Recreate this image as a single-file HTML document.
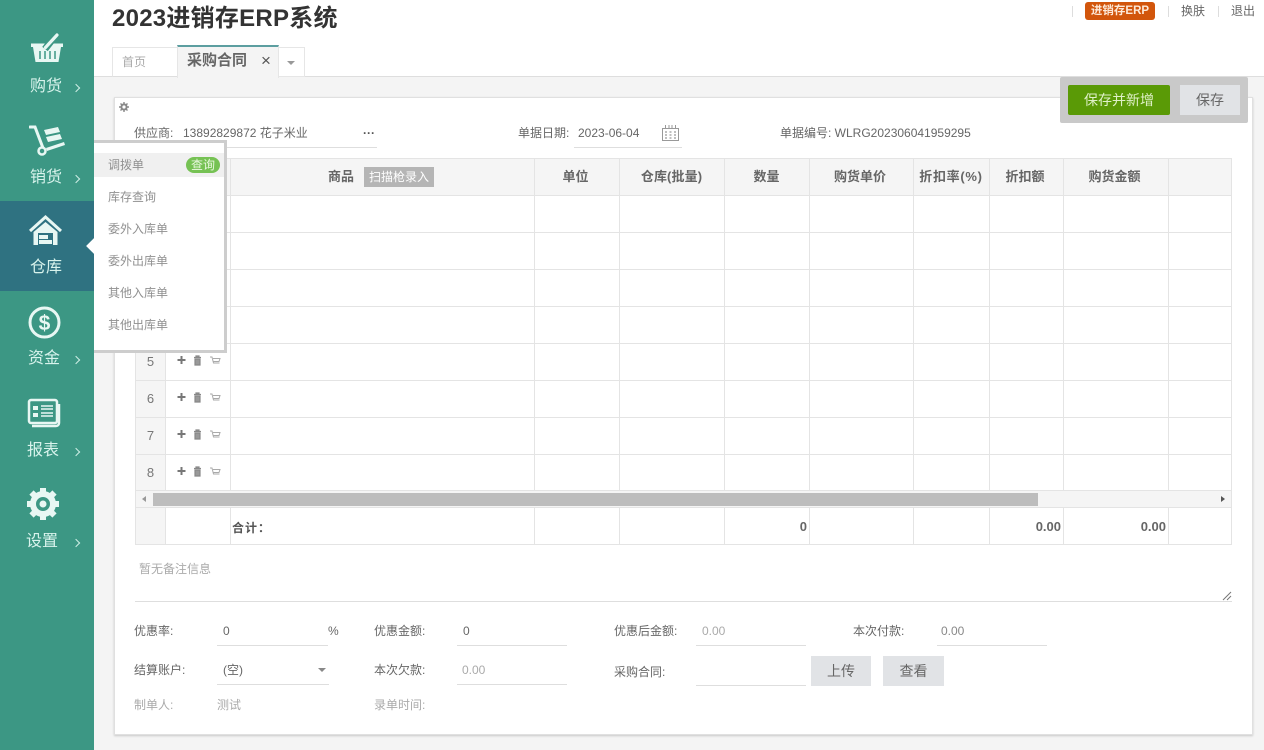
<!DOCTYPE html>
<html lang="zh-CN"><head><meta charset="utf-8"><title>2023进销存ERP系统</title>
<style>
*{box-sizing:border-box}
html,body{margin:0;padding:0;width:1264px;height:750px;overflow:hidden;background:#f4f4f4;font-family:"Liberation Sans","Noto Sans CJK SC",sans-serif;color:#666}
.t{position:absolute;white-space:nowrap;font-size:12px;line-height:16px;color:#666}
.side{position:absolute;left:0;top:0;width:94px;height:750px;background:#3c9784}
.nav{position:absolute;color:#d8f3ec;font-size:16px;line-height:20px;white-space:nowrap}
.chev{position:absolute;width:6px;height:6px;border-top:1px solid #cfeee6;border-right:1px solid #cfeee6;transform:rotate(45deg)}
.h{position:absolute;left:135px;width:1097px;height:1px;background:#e4e4e4}
.v{position:absolute;top:158px;width:1px;height:333px;background:#e4e4e4}
.f{top:508px;height:37px}
.th{position:absolute;top:168px;font-size:13px;line-height:18px;font-weight:bold;color:#666;white-space:nowrap;text-align:center}
.num{position:absolute;left:136px;width:29px;text-align:center;font-size:13px;line-height:16px;color:#777}
.ul{position:absolute;height:1px;background:#dedede}
.btn{position:absolute;background:#e1e3e6;color:#666;text-align:center;font-size:14px}
.mi{position:absolute;left:108px;font-size:12px;line-height:16px;color:#909090;white-space:nowrap}
.sep{position:absolute;top:6px;width:1px;height:11px;background:#ddd}
</style></head><body>

<!-- top bar -->
<div style="position:absolute;left:94px;top:0;width:1170px;height:77px;background:#fff;border-bottom:1px solid #dedede"></div>
<div class="t" style="left:112px;top:3px;font-size:24px;line-height:32px;font-weight:bold;color:#333;letter-spacing:.25px">2023进销存ERP系统</div>
<div class="sep" style="left:1072px"></div>
<div style="position:absolute;left:1085px;top:2px;width:70px;height:18px;background:#d2560c;border-radius:3px;color:#fde9d8;font-size:11.500px;line-height:18px;text-align:center;font-weight:bold;white-space:nowrap">进销存ERP</div>
<div class="sep" style="left:1168px"></div>
<div class="t" style="left:1181px;top:3px">换肤</div>
<div class="sep" style="left:1218px"></div>
<div class="t" style="left:1231px;top:3px">退出</div>

<!-- tabs -->
<div style="position:absolute;left:112px;top:47px;width:66px;height:30px;background:#fff;border:1px solid #e6e6e6;border-bottom:1px solid #dedede"></div>
<div class="t" style="left:122px;top:54px;color:#aaa">首页</div>
<div style="position:absolute;left:177px;top:45px;width:102px;height:33px;background:#f4f4f4;border-top:2px solid #5c9ea0;border-left:1px solid #e6e6e6;border-right:1px solid #e6e6e6"></div>
<div class="t" style="left:187px;top:52px;font-size:15px;line-height:18px;font-weight:bold;color:#666">采购合同</div>
<div class="t" style="left:261px;top:53px;font-size:17px;line-height:16px;color:#555">×</div>
<div style="position:absolute;left:278px;top:47px;width:27px;height:30px;background:#fff;border:1px solid #e6e6e6"></div>
<div style="position:absolute;left:287px;top:61px;border-left:4px solid transparent;border-right:4px solid transparent;border-top:4px solid #999"></div>

<!-- panel -->
<div style="position:absolute;left:114px;top:97px;width:1139px;height:638px;background:#fff;border:1px solid #e0e0e0;box-shadow:0 1px 2px rgba(0,0,0,.18)"></div>
<svg style="position:absolute;left:119px;top:102px" width="10" height="10" viewBox="0 0 10 10"><circle cx="5" cy="5" r="2.600" fill="none" stroke="#888" stroke-width="2"/><path d="M5 0v2M5 8v2M0 5h2M8 5h2M1.500 1.500l1.400 1.400M7.100 7.100l1.400 1.400M8.500 1.500L7.100 2.900M2.900 7.100L1.500 8.500" stroke="#888" stroke-width="1.400"/></svg>

<!-- header form -->
<div class="t" style="left:134px;top:125px">供应商:</div>
<div class="t" style="left:183px;top:125px">13892829872 花子米业</div>
<div class="t" style="left:363px;top:125px;font-weight:bold;color:#555">···</div>
<div class="ul" style="left:180px;top:147px;width:197px"></div>
<div class="t" style="left:518px;top:125px">单据日期:</div>
<div class="t" style="left:578px;top:125px">2023-06-04</div>
<svg style="position:absolute;left:662px;top:125px" width="17" height="16" viewBox="0 0 17 16" fill="none" stroke="#999"><path d="M.5 3.500h16v12H.5zM3.500 0v3M7 0v3M10 0v3M13.500 0v3"/><path d="M3 7h2M7.500 7h2M12 7h2M3 10h2M7.500 10h2M12 10h2M3 13h2M7.500 13h2M12 13h2" stroke-width="1.200"/></svg>
<div class="ul" style="left:574px;top:147px;width:108px"></div>
<div class="t" style="left:780px;top:125px">单据编号: WLRG202306041959295</div>

<!-- grid -->
<div style="position:absolute;left:135px;top:158px;width:1097px;height:37px;background:#f5f5f5"></div>
<div style="position:absolute;left:135px;top:158px;width:30px;height:387px;background:#f5f5f5"></div>
<div style="position:absolute;left:135px;top:491px;width:1097px;height:17px;background:#f5f5f5"></div>
<div class="h" style="top:158px"></div><div class="h" style="top:195px"></div><div class="h" style="top:232px"></div><div class="h" style="top:269px"></div><div class="h" style="top:306px"></div><div class="h" style="top:343px"></div><div class="h" style="top:380px"></div><div class="h" style="top:417px"></div><div class="h" style="top:454px"></div><div class="h" style="top:490px"></div><div class="h" style="top:507px"></div><div class="h" style="top:544px"></div>
<div class="v" style="left:135px;height:387px"></div><div class="v" style="left:165px"></div><div class="v" style="left:230px"></div><div class="v" style="left:534px"></div><div class="v" style="left:619px"></div><div class="v" style="left:724px"></div><div class="v" style="left:809px"></div><div class="v" style="left:913px"></div><div class="v" style="left:989px"></div><div class="v" style="left:1063px"></div><div class="v" style="left:1168px"></div><div class="v" style="left:1231px;height:387px"></div>
<div class="v f" style="left:165px"></div><div class="v f" style="left:230px"></div><div class="v f" style="left:534px"></div><div class="v f" style="left:619px"></div><div class="v f" style="left:724px"></div><div class="v f" style="left:809px"></div><div class="v f" style="left:913px"></div><div class="v f" style="left:989px"></div><div class="v f" style="left:1063px"></div><div class="v f" style="left:1168px"></div>

<div class="th" style="left:328px">商品</div>
<div style="position:absolute;left:364px;top:167px;width:70px;height:20px;background:#b5b5b5;color:#fff;font-size:12px;line-height:20px;text-align:center;white-space:nowrap">扫描枪录入</div>
<div class="th" style="left:533px;width:85px">单位</div>
<div class="th" style="left:619px;width:105px;letter-spacing:.1px">仓库(批量)</div>
<div class="th" style="left:724px;width:85px">数量</div>
<div class="th" style="left:808px;width:104px">购货单价</div>
<div class="th" style="left:913px;width:76px;letter-spacing:.7px">折扣率(%)</div>
<div class="th" style="left:988px;width:74px">折扣额</div>
<div class="th" style="left:1062px;width:105px">购货金额</div>

<div class="num" style="top:354px">5</div><div class="num" style="top:391px">6</div><div class="num" style="top:428px">7</div><div class="num" style="top:465px">8</div>

<svg width="0" height="0" style="position:absolute"><defs><g id="ops"><path d="M4.500 1v8M.5 5h8" stroke="#777" stroke-width="2" fill="none"/><path d="M17 2.500h7M19 2.500V1h3v1.500M18 4h5v6h-5z" stroke="#888" stroke-width="1.200" fill="#999"/><path d="M33 2h2l1.500 6h6M36 3.500h7l-1 3h-5.500" stroke="#aaa" stroke-width="1" fill="none"/></g></defs></svg>
<svg style="position:absolute;left:177px;top:355px" width="46" height="11"><use href="#ops"/></svg>
<svg style="position:absolute;left:177px;top:392px" width="46" height="11"><use href="#ops"/></svg>
<svg style="position:absolute;left:177px;top:429px" width="46" height="11"><use href="#ops"/></svg>
<svg style="position:absolute;left:177px;top:466px" width="46" height="11"><use href="#ops"/></svg>

<!-- scrollbar -->
<div style="position:absolute;left:142px;top:496px;border-top:3.500px solid transparent;border-bottom:3.500px solid transparent;border-right:4px solid #999"></div>
<div style="position:absolute;left:153px;top:493px;width:885px;height:13px;background:#bdbdbd"></div>
<div style="position:absolute;left:1221px;top:496px;border-top:3.500px solid transparent;border-bottom:3.500px solid transparent;border-left:4px solid #555"></div>

<!-- totals -->
<div class="t" style="left:232px;top:520px;font-size:12px;font-weight:bold;color:#555;letter-spacing:1px">合计：</div>
<div class="t" style="left:724px;width:83px;top:519px;text-align:right;font-size:13px;font-weight:bold;color:#666">0</div>
<div class="t" style="left:989px;width:72px;top:519px;text-align:right;font-size:13px;font-weight:bold;color:#666">0.00</div>
<div class="t" style="left:1063px;width:103px;top:519px;text-align:right;font-size:13px;font-weight:bold;color:#666">0.00</div>

<!-- remark -->
<div class="t" style="left:139px;top:561px;color:#aaa">暂无备注信息</div>
<div class="ul" style="left:135px;top:601px;width:1097px"></div>
<svg style="position:absolute;left:1221px;top:590px" width="11" height="11" fill="none" stroke="#777"><path d="M2 10l8-8M6 10l4-4"/></svg>

<!-- bottom form -->
<div class="t" style="left:134px;top:623px">优惠率:</div>
<div class="t" style="left:223px;top:623px">0</div><div class="ul" style="left:217px;top:645px;width:111px"></div>
<div class="t" style="left:328px;top:623px">%</div>
<div class="t" style="left:374px;top:623px">优惠金额:</div>
<div class="t" style="left:463px;top:623px">0</div><div class="ul" style="left:457px;top:645px;width:110px"></div>
<div class="t" style="left:614px;top:623px">优惠后金额:</div>
<div class="t" style="left:702px;top:623px;color:#aaa">0.00</div><div class="ul" style="left:696px;top:645px;width:110px"></div>
<div class="t" style="left:853px;top:623px">本次付款:</div>
<div class="t" style="left:941px;top:623px;color:#888">0.00</div><div class="ul" style="left:937px;top:645px;width:110px"></div>

<div class="t" style="left:134px;top:662px">结算账户:</div>
<div class="t" style="left:223px;top:662px">(空)</div>
<div style="position:absolute;left:318px;top:668px;border-left:4px solid transparent;border-right:4px solid transparent;border-top:4px solid #888"></div>
<div class="ul" style="left:217px;top:684px;width:112px"></div>
<div class="t" style="left:374px;top:662px">本次欠款:</div>
<div class="t" style="left:462px;top:662px;color:#aaa">0.00</div><div class="ul" style="left:457px;top:684px;width:110px"></div>
<div class="t" style="left:614px;top:664px">采购合同:</div><div class="ul" style="left:696px;top:685px;width:110px"></div>
<div class="btn" style="left:811px;top:656px;width:60px;height:30px;line-height:30px">上传</div>
<div class="btn" style="left:883px;top:656px;width:61px;height:30px;line-height:30px">查看</div>

<div class="t" style="left:134px;top:697px;color:#aaa">制单人:</div>
<div class="t" style="left:217px;top:697px;color:#aaa">测试</div>
<div class="t" style="left:374px;top:697px;color:#aaa">录单时间:</div>

<!-- save bar -->
<div style="position:absolute;left:1060px;top:77px;width:188px;height:46px;background:#c9c9c9;border-radius:2px"></div>
<div style="position:absolute;left:1068px;top:85px;width:102px;height:30px;background:#5a9a06;border-radius:2px;color:#dff0c8;font-size:14px;line-height:30px;text-align:center">保存并新增</div>
<div class="btn" style="left:1180px;top:85px;width:60px;height:30px;line-height:30px">保存</div>

<!-- sidebar -->
<div class="side"></div>
<div style="position:absolute;left:0;top:201px;width:94px;height:90px;background:#2f7281"></div>

<svg style="position:absolute;left:30px;top:33px" width="34" height="30" viewBox="0 0 34 30"><path d="M1 10.500h32v3.500h-2l-2.500 15H5.500L3 14H1z" fill="#e8f7f3"/><path d="M15 16L26 2" stroke="#3c9784" stroke-width="7"/><path d="M15.500 14.500L27 2" stroke="#e8f7f3" stroke-width="3.200" stroke-linecap="round"/><path d="M10 18v8M15 18v8M20 18v8M25 18v8" stroke="#3c9784" stroke-width="1.500"/></svg>
<div class="nav" style="left:30px;top:77px">购货</div><div class="chev" style="left:73px;top:85px"></div>

<svg style="position:absolute;left:29px;top:124px" width="36" height="33" viewBox="0 0 36 33" fill="#e8f7f3"><path d="M1 3h5l8 21" fill="none" stroke="#e8f7f3" stroke-width="3" stroke-linecap="round"/><path d="M15 6l14-3 2 5-14 3zM17 13l14-3 2 5-14 3zM17 24l18-6 1 3-18 6z"/><circle cx="13" cy="27" r="3.500" fill="#3c9784" stroke="#e8f7f3" stroke-width="2.500"/></svg>
<div class="nav" style="left:30px;top:168px">销货</div><div class="chev" style="left:73px;top:176px"></div>

<svg style="position:absolute;left:29px;top:214px" width="34" height="32" viewBox="0 0 34 32"><path d="M4.500 31V18L16.500 8 28.500 18v13z" fill="#e8f7f3"/><path d="M1 17L16.500 3 32 17" fill="none" stroke="#e8f7f3" stroke-width="3"/><path d="M9 19h15v12H9z" fill="#2f7281"/><path d="M10 21h9v4h-9zM10 26h13v4H10z" fill="#e8f7f3"/></svg>
<div class="nav" style="left:30px;top:258px">仓库</div>
<div style="position:absolute;left:86px;top:238px;width:16px;height:16px;background:#fff;transform:rotate(45deg) scale(.7)"></div>

<svg style="position:absolute;left:28px;top:306px" width="33" height="33" viewBox="0 0 33 33"><circle cx="16.500" cy="16.500" r="14.500" fill="none" stroke="#e8f7f3" stroke-width="3"/><text x="16.500" y="24" text-anchor="middle" font-family="Liberation Sans" font-weight="bold" font-size="21" fill="#e8f7f3">$</text></svg>
<div class="nav" style="left:28px;top:349px">资金</div><div class="chev" style="left:73px;top:357px"></div>

<svg style="position:absolute;left:27px;top:398px" width="34" height="30" viewBox="0 0 34 30" fill="none" stroke="#e8f7f3"><rect x="2" y="2" width="28" height="23" rx="2" stroke-width="2.500"/><path d="M32 6v19a3 3 0 0 1-3 3H5" stroke-width="2.500"/><path d="M6 8h5v4H6zM6 15h5v4H6z" fill="#e8f7f3" stroke="none"/><path d="M14 8h12M14 11h12M14 15h12M14 18h12" stroke-width="1.500"/></svg>
<div class="nav" style="left:27px;top:441px">报表</div><div class="chev" style="left:73px;top:449px"></div>

<svg style="position:absolute;left:26px;top:487px" width="34" height="34" viewBox="0 0 34 34"><circle cx="17" cy="17" r="10" fill="none" stroke="#e8f7f3" stroke-width="6"/><circle cx="17" cy="17" r="3.500" fill="#e8f7f3"/><path d="M17 1v7M17 26v7M1 17h7M26 17h7M5.500 5.500l5 5M23.500 23.500l5 5M28.500 5.500l-5 5M10.500 23.500l-5 5" stroke="#e8f7f3" stroke-width="6"/></svg>
<div class="nav" style="left:26px;top:532px">设置</div><div class="chev" style="left:73px;top:540px"></div>

<!-- popup -->
<div style="position:absolute;left:94px;top:140px;width:133px;height:213px;background:#fff;border:3px solid #cdcdcd;border-left:0"></div>
<div style="position:absolute;left:94px;top:153px;width:130px;height:24px;background:#f0f0f0"></div>
<div class="mi" style="top:157px">调拨单</div>
<div style="position:absolute;left:186px;top:157px;width:34px;height:16px;background:#76c254;border-radius:8px;color:#eaf8e0;font-size:12px;line-height:16px;text-align:center;white-space:nowrap">查询</div>
<div class="mi" style="top:189px">库存查询</div>
<div class="mi" style="top:221px">委外入库单</div>
<div class="mi" style="top:253px">委外出库单</div>
<div class="mi" style="top:285px">其他入库单</div>
<div class="mi" style="top:317px">其他出库单</div>
</body></html>
